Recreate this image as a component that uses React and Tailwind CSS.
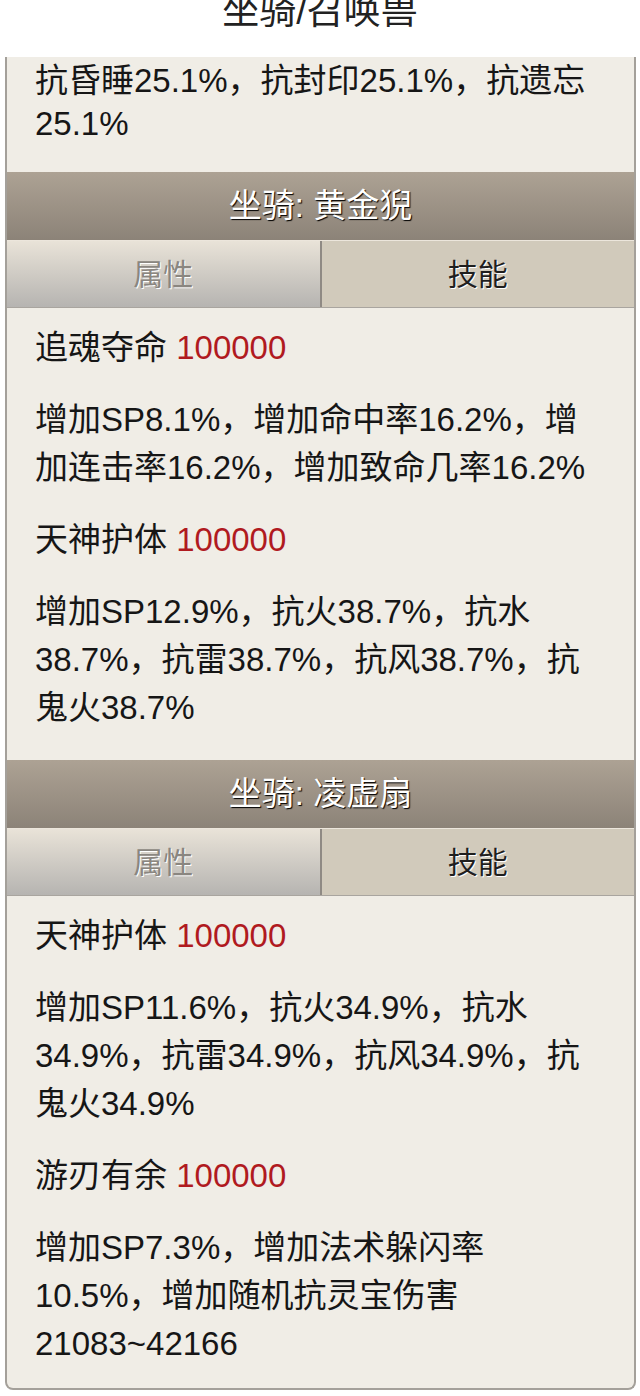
const FONT = "font-['Liberation_Sans','Noto_Sans_CJK_SC',sans-serif]";

const mounts = [
  {
    name: "黄金猊",
    skills: [
      {
        name: "追魂夺命",
        level: "100000",
        desc: "增加SP8.1%，增加命中率16.2%，增加连击率16.2%，增加致命几率16.2%",
      },
      {
        name: "天神护体",
        level: "100000",
        desc: "增加SP12.9%，抗火38.7%，抗水38.7%，抗雷38.7%，抗风38.7%，抗鬼火38.7%",
      },
    ],
    pb: "pb-7",
  },
  {
    name: "凌虚扇",
    skills: [
      {
        name: "天神护体",
        level: "100000",
        desc: "增加SP11.6%，抗火34.9%，抗水34.9%，抗雷34.9%，抗风34.9%，抗鬼火34.9%",
      },
      {
        name: "游刃有余",
        level: "100000",
        desc: "增加SP7.3%，增加法术躲闪率10.5%，增加随机抗灵宝伤害21083~42166",
      },
    ],
    pb: "pb-5",
  },
];

function MountSection({ mount }) {
  return (
    <div>
      <div className="flex h-[68px] items-center justify-center bg-gradient-to-b from-[#ada294] to-[#8c8378] text-[33px] text-white [text-shadow:1px_1px_1px_#000]">
        坐骑: {mount.name}
      </div>
      <div className="flex h-[68px] border-t border-t-[#ece6dc] border-b border-b-[#a9a59f]">
        <div className="flex flex-1 items-center justify-center border-r-2 border-r-[#8f8a84] bg-gradient-to-b from-[#e9e3d8] to-[#b6b4b1] text-[30px] text-[#8a8680] [text-shadow:1px_1px_0_#fff]">
          属性
        </div>
        <div className="flex flex-1 items-center justify-center bg-[#d1cabb] text-[30px] text-[#1f1f1f] [text-shadow:1px_1px_0_#fff]">
          技能
        </div>
      </div>
      <div className={`space-y-6 px-7 pt-4 ${mount.pb} text-[33px] leading-[48px] text-[#161616]`}>
        {mount.skills.map((s, i) => (
          <div key={i} className="space-y-6">
            <p>
              {s.name} <span className="text-[#b01a1f]">{s.level}</span>
            </p>
            <p>{s.desc}</p>
          </div>
        ))}
      </div>
    </div>
  );
}

export default function App() {
  return (
    <div className={`min-h-[1396px] bg-white pb-2 ${FONT}`}>
      <div className="flex h-[57px] items-start justify-center overflow-hidden">
        <h1 className="-mt-[7px] text-[37px] leading-[37px] text-[#222]">坐骑/召唤兽</h1>
      </div>
      <div className="ml-[5px] mr-[4px] overflow-hidden rounded-b-[8px] border-x-2 border-b-2 border-[#a4a09a] bg-[#f0ede6]">
        <div className="px-7 pt-[2px] pb-[27px] text-[33px] leading-[43px] text-[#161616]">
          抗昏睡25.1%，抗封印25.1%，抗遗忘25.1%
        </div>
        {mounts.map((m) => (
          <MountSection key={m.name} mount={m} />
        ))}
      </div>
    </div>
  );
}
